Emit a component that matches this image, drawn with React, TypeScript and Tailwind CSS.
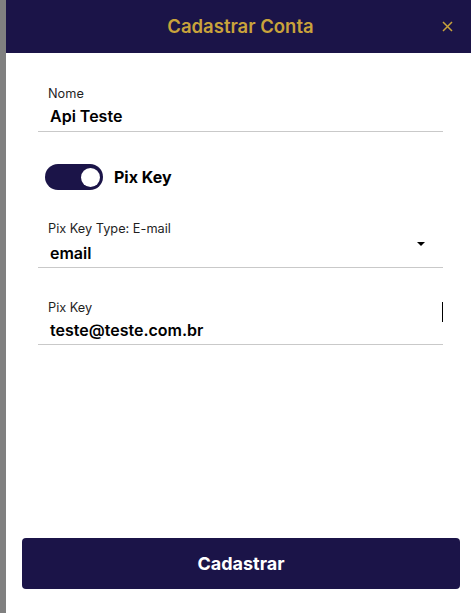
import { useState } from "react";

const font = { fontFamily: "Inter, 'Noto Sans', sans-serif" };

function Field({
  label,
  value,
  select,
  cursor,
  gap = "mt-[2px]",
  pad = "pb-[3px]",
}: {
  label: string;
  value: string;
  select?: boolean;
  cursor?: boolean;
  gap?: string;
  pad?: string;
}) {
  return (
    <div className="relative border-b border-[#c9c9c9]">
      <div className="pl-[10px] text-[12.75px] leading-[16px] text-[#1f1f1f]">{label}</div>
      <div className={`${gap} ${pad} flex items-center pl-[12px] pr-[18px] text-[16px] font-semibold leading-[24px] text-black`}>
        <span className="flex-1">{value}</span>
        {select && (
          <span className="mb-[19px] h-0 w-0 border-x-[4px] border-t-[4px] border-x-transparent border-t-black" />
        )}
      </div>
      {cursor && <span className="absolute right-0 top-[2px] h-[20px] w-px bg-black" />}
    </div>
  );
}

export default function App() {
  const [pix, setPix] = useState(true);

  return (
    <div className="flex h-[613px] w-[471px] bg-white" style={font}>
      <div className="w-[6px] bg-[#808080]" />
      <div className="flex flex-1 flex-col">
        <div className="relative flex h-[53px] items-center justify-center bg-[#1b1448]">
          <h1 className="ml-[4px] text-[18.5px] font-semibold text-[#c9a33b]">Cadastrar Conta</h1>
          <button className="absolute right-[18px] top-[21px] text-[#c9a33b]">
            <svg width="11" height="11" viewBox="0 0 11 11" fill="none" stroke="currentColor" strokeWidth="1.5">
              <path d="M1 1l9 9M10 1l-9 9" />
            </svg>
          </button>
        </div>

        <div className="flex flex-col pl-[32px] pr-[28px] pt-[33px]">
          <Field label="Nome" value="Api Teste" />

          <div className="mt-[32px] flex items-center gap-[11px] pl-[7px]">
            <button
              onClick={() => setPix(!pix)}
              className={`flex h-[26px] w-[58px] items-center rounded-full px-[3px] ${pix ? "justify-end bg-[#1b1448]" : "justify-start bg-gray-300"}`}
            >
              <span className="h-[19px] w-[19px] rounded-full bg-white" />
            </button>
            <span className="text-[16px] font-bold text-black">Pix Key</span>
          </div>

          <div className="mt-[31px]">
            <Field label="Pix Key Type: E-mail" value="email" select gap="mt-[4px]" pad="pb-[2px]" />
          </div>

          <div className="mt-[32px]">
            <Field label="Pix Key" value="teste@teste.com.br" cursor gap="mt-[2px]" pad="pb-[2px]" />
          </div>
        </div>

        <div className="mt-auto mb-[24px] ml-[16px] mr-[11px]">
          <button className="h-[51px] w-full rounded-[4px] bg-[#1b1448] text-[18px] font-bold text-white">
            Cadastrar
          </button>
        </div>
      </div>
    </div>
  );
}
